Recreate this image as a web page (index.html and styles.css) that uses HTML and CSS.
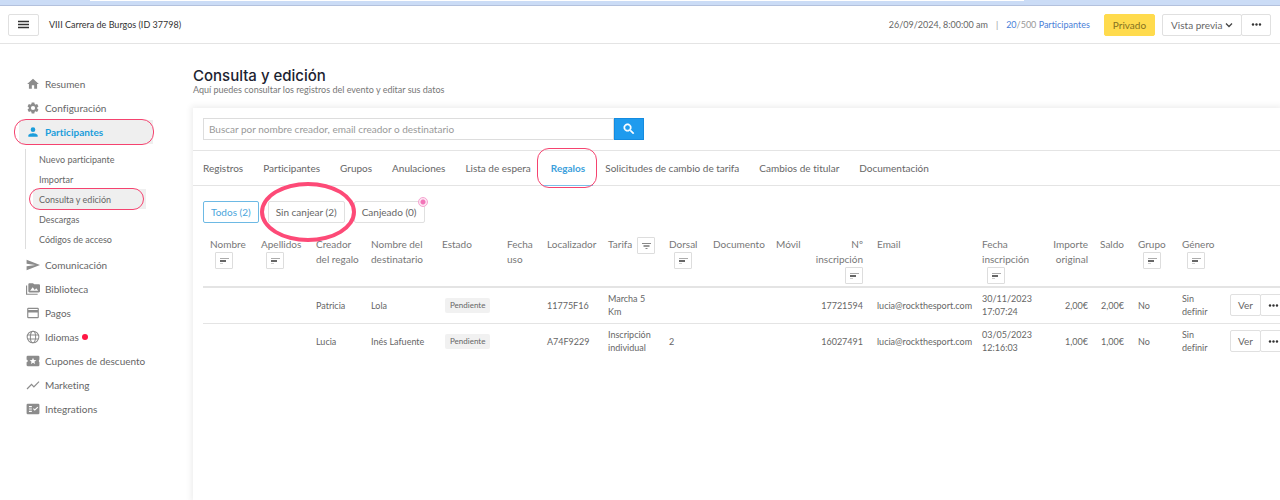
FILE: index.html
```html
<!DOCTYPE html>
<html lang="es">
<head>
  <meta charset="UTF-8" />
  <meta name="viewport" content="width=device-width, initial-scale=1.0"/>
  <title>Consulta y edición - VIII Carrera de Burgos</title>
  <link rel="stylesheet" href="styles.css">
</head>
<body>
  <svg class="sprite" aria-hidden="true">
    <symbol id="sort" viewBox="0 0 12 12">
      <path d="M2 3.5h9" stroke="#aaa"/>
      <path d="M2 6h6" stroke="#000" stroke-width="1.2"/>
      <path d="M2 8.5h3" stroke="#ccc"/>
    </symbol>
    <symbol id="filter" viewBox="0 0 12 12">
      <path d="M2 3.5h9M5.500 8.500h2" stroke="#888"/>
      <path d="M3.500 6h6" stroke="#333"/>
    </symbol>
    <symbol id="dots" viewBox="0 0 12 12">
      <circle cx="2.200" cy="6" r="1.300"/><circle cx="6" cy="6" r="1.300"/><circle cx="9.800" cy="6" r="1.300"/>
    </symbol>
  </svg>

  <div class="browser-bar"><div class="address"></div></div>

  <header class="topbar">
    <button class="btn menu-btn" aria-label="Menú">
      <svg viewBox="0 0 11 11"><path d="M0 2.500h11M0 5.500h11M0 8.500h11" stroke="#333" stroke-width="1.300"/></svg>
    </button>
    <span class="event-name">VIII Carrera de Burgos (ID 37798)</span>
    <span class="event-date">26/09/2024, 8:00:00 am</span>
    <span class="divider">|</span>
    <a class="event-count" href="#">20<span>/500</span> Participantes</a>
    <button class="btn private-btn">Privado</button>
    <div class="btn-group">
      <button class="btn preview-btn">Vista previa
        <svg class="chevron" viewBox="0 0 8 8"><path d="M1 2.500l3 3 3-3" fill="none" stroke="#444" stroke-width="1.300"/></svg>
      </button>
      <button class="btn more-btn" aria-label="Más"><svg><use href="#dots"/></svg></button>
    </div>
  </header>

  <div class="layout">
    <nav class="sidebar">
      <ul>
        <li><a href="#"><svg viewBox="0 0 24 24"><path d="M10 20v-6h4v6h5v-8h3L12 3 2 12h3v8z"/></svg>Resumen</a></li>
        <li><a href="#"><svg viewBox="0 0 24 24"><path d="M19.140 12.940c.040-.3.060-.61.060-.94 0-.32-.02-.64-.07-.94l2.030-1.580c.18-.14.230-.41.120-.61l-1.920-3.320c-.12-.22-.37-.29-.59-.22l-2.390.96c-.5-.38-1.030-.7-1.620-.94l-.36-2.540c-.04-.24-.24-.41-.48-.41h-3.840c-.24 0-.43.17-.47.41l-.36 2.540c-.59.24-1.130.57-1.620.94l-2.390-.96c-.22-.08-.47 0-.59.22L2.740 8.870c-.12.210-.08.470.12.610l2.030 1.580c-.05.3-.09.630-.09.940s.02.640.070.940l-2.030 1.580c-.18.140-.23.410-.12.610l1.920 3.320c.12.220.37.290.59.220l2.390-.96c.5.380 1.030.7 1.620.94l.36 2.540c.05.240.24.410.48.410h3.840c.24 0 .44-.17.47-.41l.36-2.540c.59-.24 1.130-.56 1.620-.94l2.390.96c.22.080.47 0 .59-.22l1.920-3.320c.12-.22.070-.47-.12-.61l-2.010-1.580zM12 15.600a3.600 3.600 0 1 1 0-7.200 3.600 3.600 0 0 1 0 7.200z"/></svg>Configuración</a></li>
        <li class="active marked"><a href="#"><svg viewBox="0 0 24 24"><path d="M12 12a4 4 0 1 0 0-8 4 4 0 0 0 0 8zm0 2c-2.670 0-8 1.340-8 4v2h16v-2c0-2.660-5.330-4-8-4z"/></svg>Participantes</a></li>
      </ul>
      <ul class="submenu">
        <li><a href="#">Nuevo participante</a></li>
        <li><a href="#">Importar</a></li>
        <li class="current marked"><a href="#">Consulta y edición</a></li>
        <li><a href="#">Descargas</a></li>
        <li><a href="#">Códigos de acceso</a></li>
      </ul>
      <ul>
        <li><a href="#"><svg viewBox="0 0 24 24"><path d="M1 21L24 12 1 3v7l15 2-15 2z"/></svg>Comunicación</a></li>
        <li><a href="#"><svg viewBox="0 0 24 24"><path d="M2 6H0v16h20v-2H2zM22 4h-8l-2-2H6c-1.100 0-2 .9-2 2v12c0 1.100.9 2 2 2h16c1.100 0 2-.9 2-2V6c0-1.100-.9-2-2-2zM7 15l4.500-6 3.500 4.500 2.500-3L21 15z"/></svg>Biblioteca</a></li>
        <li><a href="#"><svg viewBox="0 0 24 24"><path d="M20 3H4a2 2 0 0 0-2 2v14a2 2 0 0 0 2 2h16a2 2 0 0 0 2-2V5a2 2 0 0 0-2-2zm0 16H4v-8h16zm0-12H4V5h16z"/></svg>Pagos</a></li>
        <li><a href="#"><svg viewBox="0 0 24 24"><g fill="none" stroke="#8c8c8c" stroke-width="1.800"><circle cx="12" cy="12" r="10"/><ellipse cx="12" cy="12" rx="4.500" ry="10"/><path d="M3 8.500h18M3 15.500h18"/></g></svg>Idiomas<i class="red-dot"></i></a></li>
        <li><a href="#"><svg viewBox="0 0 24 24"><path d="M22 12c0-1.100.9-2 1-2V5a2 2 0 0 0-2-2H3a2 2 0 0 0-2 2v5c1.100 0 2 .9 2 2s-.9 2-2 2v5c0 1.100.9 2 2 2h18a2 2 0 0 0 2-2v-5c-.1 0-1-.9-1-2zm-6.400 5.300L12 15l-3.600 2.300 1.100-4.100-3.300-2.700 4.200-.2L12 6.300l1.600 4 4.200.2-3.300 2.700z"/></svg>Cupones de descuento</a></li>
        <li><a href="#"><svg viewBox="0 0 24 24"><path d="M2.500 19.500l7-7 4 4L23 6.900 21.600 5.500l-8.100 8.100-4-4L1 18z"/></svg>Marketing</a></li>
        <li><a href="#"><svg viewBox="0 0 24 24"><path d="M21 3H3a2 2 0 0 0-2 2v14a2 2 0 0 0 2 2h18a2 2 0 0 0 2-2V5a2 2 0 0 0-2-2zM10 17H5v-2h5zm0-4H5v-2h5zm0-4H5V7h5zm5 6l-3-2.800 1.400-1.400 1.600 1.600L19.600 8 21 9.400z"/></svg>Integrations</a></li>
      </ul>
    </nav>

    <main>
      <h1>Consulta y edición</h1>
      <p class="subtitle">Aquí puedes consultar los registros del evento y editar sus datos</p>

      <section class="card">
        <form class="search">
          <input type="text" aria-label="Buscar" placeholder="Buscar por nombre creador, email creador o destinatario">
          <button type="button" aria-label="Buscar"><svg viewBox="0 0 24 24"><path d="M15.500 14h-.8l-.3-.3A6.500 6.500 0 1 0 13.700 14.400l.3.300v.8l5 5 1.500-1.500zm-6 0a4.500 4.500 0 1 1 0-9 4.500 4.500 0 0 1 0 9z" stroke="#fff"/></svg></button>
        </form>

        <nav class="tabs">
          <a href="#">Registros</a>
          <a href="#">Participantes</a>
          <a href="#">Grupos</a>
          <a href="#">Anulaciones</a>
          <a href="#">Lista de espera</a>
          <a href="#" class="selected marked">Regalos</a>
          <a href="#">Solicitudes de cambio de tarifa</a>
          <a href="#">Cambios de titular</a>
          <a href="#">Documentación</a>
        </nav>

        <div class="filters">
          <button class="btn on">Todos (2)</button>
          <button class="btn circled">Sin canjear (2)</button>
          <button class="btn hotspot">Canjeado (0)</button>
        </div>

        <div class="table-wrap">
          <table>
            <colgroup>
              <col class="w51"><col class="w55"><col class="w55"><col class="w71"><col class="w65">
              <col class="w40"><col class="w61"><col class="w61"><col class="w44"><col class="w63">
              <col class="w42"><col class="w59"><col class="w105"><col class="w65"><col class="w55">
              <col class="w36"><col class="w44"><col class="w48"><col class="w71">
            </colgroup>
            <thead>
              <tr>
                <th>Nombre <button class="sort" aria-label="Ordenar"><svg><use href="#sort"/></svg></button></th>
                <th>Apellidos <button class="sort" aria-label="Ordenar"><svg><use href="#sort"/></svg></button></th>
                <th>Creador del regalo</th>
                <th>Nombre del destinatario</th>
                <th>Estado</th>
                <th>Fecha uso</th>
                <th>Localizador</th>
                <th><div class="inline-filter">Tarifa <button class="sort" aria-label="Filtrar"><svg><use href="#filter"/></svg></button></div></th>
                <th>Dorsal <button class="sort" aria-label="Ordenar"><svg><use href="#sort"/></svg></button></th>
                <th>Documento</th>
                <th>Móvil</th>
                <th class="num">Nº inscripción <button class="sort" aria-label="Ordenar"><svg><use href="#sort"/></svg></button></th>
                <th>Email</th>
                <th>Fecha inscripción <button class="sort" aria-label="Ordenar"><svg><use href="#sort"/></svg></button></th>
                <th class="num">Importe original</th>
                <th class="num">Saldo</th>
                <th>Grupo <button class="sort" aria-label="Ordenar"><svg><use href="#sort"/></svg></button></th>
                <th>Género <button class="sort" aria-label="Ordenar"><svg><use href="#sort"/></svg></button></th>
                <th></th>
              </tr>
            </thead>
            <tbody>
              <tr>
                <td></td>
                <td></td>
                <td>Patricia</td>
                <td>Lola</td>
                <td><span class="badge">Pendiente</span></td>
                <td></td>
                <td>11775F16</td>
                <td>Marcha 5<br>Km</td>
                <td></td>
                <td></td>
                <td></td>
                <td class="num">17721594</td>
                <td>lucia@rockthesport.com</td>
                <td>30/11/2023 17:07:24</td>
                <td class="num">2,00€</td>
                <td class="num">2,00€</td>
                <td>No</td>
                <td>Sin<br>definir</td>
                <td class="actions"><div class="btn-group"><button class="btn">Ver</button><button class="btn more-btn" aria-label="Más"><svg><use href="#dots"/></svg></button></div></td>
              </tr>
              <tr>
                <td></td>
                <td></td>
                <td>Lucia</td>
                <td>Inés Lafuente</td>
                <td><span class="badge">Pendiente</span></td>
                <td></td>
                <td>A74F9229</td>
                <td>Inscripción individual</td>
                <td>2</td>
                <td></td>
                <td></td>
                <td class="num">16027491</td>
                <td>lucia@rockthesport.com</td>
                <td>03/05/2023 12:16:03</td>
                <td class="num">1,00€</td>
                <td class="num">1,00€</td>
                <td>No</td>
                <td>Sin<br>definir</td>
                <td class="actions"><div class="btn-group"><button class="btn">Ver</button><button class="btn more-btn" aria-label="Más"><svg><use href="#dots"/></svg></button></div></td>
              </tr>
            </tbody>
          </table>
        </div>
      </section>
    </main>
  </div>
</body>
</html>
```

FILE: styles.css
```css
* {
  box-sizing: border-box;
}
body {
  margin: 0;
  min-height: 100vh;
  display: flex;
  flex-direction: column;
  overflow: hidden;
  font-family: Lato, "Liberation Sans", sans-serif;
  font-size: 10px;
  font-variant-ligatures: none;
  color: #666;
  background: #fff;
}
a {
  color: inherit;
  text-decoration: none;
}
ul {
  list-style: none;
  margin: 0;
  padding: 0;
}
button,
input {
  font: inherit;
  font-variant-ligatures: none;
  color: inherit;
}
.sprite {
  display: none;
}

/* strip above the page */
.browser-bar {
  height: 6px;
  padding: 0 256px 0 90px;
  background: #cbdcf6;
  border-bottom: 1px solid #b3c1dd;
}
.address {
  height: 1px;
  background: #fff;
}

/* buttons */
.btn {
  position: relative;
  height: 22px;
  padding: 0 7px;
  background: #fff;
  border: 1px solid #e0e0e0;
  border-radius: 2px;
  white-space: nowrap;
}
.btn-group {
  display: flex;
}
.btn-group .btn + .btn {
  margin-left: -1px;
}
.more-btn svg {
  display: block;
  width: 11px;
  height: 11px;
  margin: auto;
  fill: #333;
}

/* header */
.topbar {
  display: flex;
  align-items: center;
  height: 38px;
  padding: 0 9px 0 8px;
  border-bottom: 1px solid #e4e4e4;
}
.menu-btn {
  width: 31px;
}
.menu-btn svg {
  display: block;
  width: 11px;
  height: 11px;
  margin: auto;
}
.event-name {
  margin-left: 10px;
  margin-right: auto;
  font-size: 9px;
  color: #333;
}
.event-date,
.event-count,
.divider {
  font-size: 9px;
}
.divider {
  margin: 0 8px;
  color: #999;
}
.event-count {
  color: #4a80d8;
}
.event-count span {
  color: #999;
}
.private-btn {
  margin: 0 7px 0 14px;
  background: #ffdb4d;
  border-color: #ffdb4d;
  color: #84711f;
}
.topbar .preview-btn,
.topbar .private-btn {
  padding: 0 8px;
}
.topbar .more-btn {
  width: 30px;
}
.chevron {
  width: 8px;
  height: 8px;
}

/* side menu */
.layout {
  flex: 1;
  display: flex;
}
.sidebar {
  width: 193px;
  flex-shrink: 0;
  padding-top: 28px;
}
.sidebar li {
  position: relative;
  margin-left: 19px;
  width: 134px;
}
.sidebar a {
  display: flex;
  align-items: center;
  height: 24px;
  padding-left: 7px;
}
.sidebar svg {
  width: 14px;
  height: 14px;
  margin-right: 5px;
  fill: #8c8c8c;
}
.sidebar .active a {
  color: #1b9ddb;
  font-weight: bold;
  background: #efefef;
}
.sidebar .active svg {
  fill: #1b9ddb;
}
.red-dot {
  width: 6px;
  height: 6px;
  margin-left: 3px;
  border-radius: 50%;
  background: #ff1744;
}
.sidebar .submenu {
  margin: 5px 0 4px 25px;
  border-left: 1px solid #ddd;
}
.sidebar .submenu li {
  margin-left: 7px;
  width: 113px;
}
.sidebar .submenu a {
  height: 20px;
  padding-left: 6px;
  font-size: 9px;
}
.sidebar .submenu .current a {
  background: #efefef;
}

/* pink outlines */
.marked::after {
  content: "";
  position: absolute;
  inset: -1px -1px -1px -5px;
  border: 1px solid #f5436f;
  border-radius: 12px;
  pointer-events: none;
}
.submenu .marked::after {
  inset: -1px 2px -1px -4px;
}

/* content */
main {
  flex: 1;
  min-width: 0;
  display: flex;
  flex-direction: column;
}
h1 {
  margin: 24px 0 0;
  font-family: Inter, "Open Sans", sans-serif;
  font-size: 15px;
  font-weight: 500;
  line-height: 16px;
  color: #1c2331;
}
.subtitle {
  margin: 0;
  font-size: 9px;
  line-height: 12px;
  color: #777;
}
.card {
  flex: 1;
  margin-top: 12px;
  box-shadow: 0 0 6px 2px rgba(0, 0, 0, 0.07);
}
.search {
  display: flex;
  max-width: 451px;
  padding: 10px 0 10px 10px;
}
.search input {
  flex: 1;
  min-width: 0;
  height: 22px;
  padding: 0 5px;
  border: 1px solid #ddd;
}
.search input::placeholder {
  color: #999;
}
.search button {
  width: 30px;
  height: 22px;
  padding: 0;
  border: 1px solid #148be0;
  background: #1f9bee;
}
.search svg {
  display: block;
  width: 14px;
  height: 14px;
  margin: auto;
  fill: #fff;
}
.tabs {
  display: flex;
  gap: 20px;
  height: 36px;
  padding: 0 10px;
  border-top: 1px solid #e4e4e4;
  border-bottom: 1px solid #e4e4e4;
  line-height: 34px;
  white-space: nowrap;
}
.tabs a {
  position: relative;
}
.tabs .selected {
  font-weight: bold;
  color: #3c9fdc;
}
.tabs .selected::before {
  content: "";
  position: absolute;
  inset: auto -8px -1px;
  border-bottom: 1px solid #7dc0e8;
}
.tabs .marked::after {
  inset: -3px -12px -3px -14px;
}
.filters {
  display: flex;
  gap: 9px;
  padding: 15px 10px 12px;
}
.filters .on {
  color: #4aa5dc;
  border-color: #6db9e4;
}
.circled::after {
  content: "";
  position: absolute;
  z-index: 1;
  inset: -20px -12px -20px -9px;
  border: 4px solid #fd4a77;
  border-radius: 50%;
  pointer-events: none;
}
.hotspot::after {
  content: "";
  position: absolute;
  top: -5px;
  right: -4px;
  width: 8px;
  height: 8px;
  border: 1px solid #f7a3d0;
  border-radius: 50%;
  background: radial-gradient(#f274b8 2px, #fde6f3 3px);
}

/* table */
.table-wrap {
  margin-left: 10px;
  overflow: hidden;
}
table {
  width: 100%;
  min-width: 1091px;
  table-layout: fixed;
  border-collapse: collapse;
}
th,
td {
  padding: 0 0 0 7px;
  text-align: left;
  font-weight: normal;
}
th {
  height: 52px;
  padding-top: 2px;
  vertical-align: top;
  line-height: 15px;
  color: #777;
}
td {
  height: 36px;
  font-size: 9px;
  line-height: 13px;
}
tr {
  border-bottom: 1px solid #e4e4e4;
}
thead tr {
  border-bottom-width: 2px;
}
tbody tr:last-child {
  border-bottom: 0;
}
.num {
  padding-left: 0;
  padding-right: 7px;
  text-align: right;
}
.sort {
  display: block;
  width: 18px;
  height: 17px;
  margin-left: 5px;
  padding: 0;
  border: 1px solid #ddd;
  border-radius: 1px;
  background: #fff;
}
.num .sort {
  margin-left: auto;
}
.sort svg {
  display: block;
  width: 12px;
  height: 12px;
  margin: auto;
}
.inline-filter {
  display: flex;
}
.badge {
  display: inline-block;
  margin-left: 3px;
  padding: 1px 5px;
  border-radius: 2px;
  background: #f1f1f1;
  font-size: 8px;
}
.actions .btn {
  font-size: 10px;
}
.w36 { width: 36px; }
.w40 { width: 40px; }
.w42 { width: 42px; }
.w44 { width: 44px; }
.w48 { width: 48px; }
.w51 { width: 51px; }
.w55 { width: 55px; }
.w59 { width: 59px; }
.w61 { width: 61px; }
.w63 { width: 63px; }
.w65 { width: 65px; }
.w71 { width: 71px; }
.w105 { width: 105px; }
```
